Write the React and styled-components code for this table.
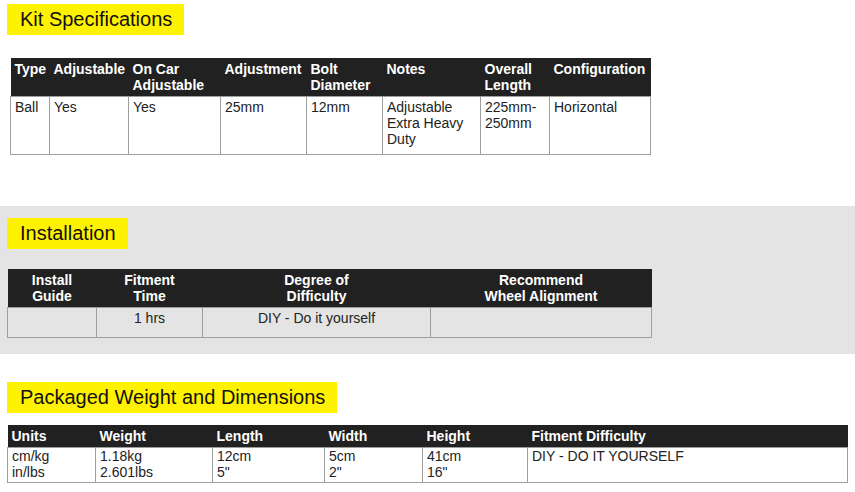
import styled, { createGlobalStyle } from 'styled-components';

const GlobalStyle = createGlobalStyle`
  body {
    margin: 0;
    background: #fff;
    font-family: "Liberation Sans", Arial, sans-serif;
    color: #222;
  }
`;

const Section = styled.section`
  background: ${(p) => (p.$shaded ? '#e4e4e4' : 'transparent')};
  padding: ${(p) => p.$pad};
`;

const Heading = styled.h2`
  display: inline-block;
  margin: 0;
  height: 31px;
  line-height: 31px;
  padding: 0 12px 0 13px;
  background: #fff200;
  color: #111;
  font-size: 20px;
  font-weight: normal;
`;

const Table = styled.table`
  border-collapse: collapse;
  table-layout: fixed;
  width: ${(p) => p.$width}px;
  margin: ${(p) => p.$margin};
  font-size: 14px;
  line-height: 16px;
`;

const Th = styled.th`
  background: #212121;
  color: #fff;
  font-weight: bold;
  vertical-align: top;
  text-align: ${(p) => (p.$center ? 'center' : 'left')};
  padding: 3px 4px;
`;

const Td = styled.td`
  background: ${(p) => (p.$clear ? 'transparent' : '#fff')};
  color: #222;
  border: 1px solid #9e9e9e;
  vertical-align: top;
  text-align: ${(p) => (p.$center ? 'center' : 'left')};
  padding: ${(p) => p.$pad || '2px 4px'};
  height: ${(p) => p.$h || 'auto'};
`;

const kitCols = [39, 79, 92, 86, 76, 98, 69, 101];
const kitHead = ['Type', 'Adjustable', 'On Car Adjustable', 'Adjustment', 'Bolt Diameter', 'Notes', 'Overall Length', 'Configuration'];
const kitRow = ['Ball', 'Yes', 'Yes', '25mm', '12mm', 'Adjustable Extra Heavy Duty', '225mm-250mm', 'Horizontal'];

const instCols = [89, 106, 228, 221];
const instHead = [['Install', 'Guide'], ['Fitment', 'Time'], ['Degree of', 'Difficulty'], ['Recommend', 'Wheel Alignment']];
const instRow = ['', '1 hrs', 'DIY - Do it yourself', ''];

const dimCols = [88, 117, 112, 98, 105, 320];
const dimHead = ['Units', 'Weight', 'Length', 'Width', 'Height', 'Fitment Difficulty'];
const dimRow = [['cm/kg', 'in/lbs'], ['1.18kg', '2.601lbs'], ['12cm', '5"'], ['5cm', '2"'], ['41cm', '16"'], ['DIY - DO IT YOURSELF']];

function Cols({ widths }) {
  return (
    <colgroup>
      {widths.map((w, i) => (
        <col key={i} style={{ width: w }} />
      ))}
    </colgroup>
  );
}

export default function App() {
  return (
    <>
      <GlobalStyle />
      <Section $pad="4px 0 51px 7px">
        <Heading>Kit Specifications</Heading>
        <Table $width={640} $margin="23px 0 0 3px">
          <Cols widths={kitCols} />
          <thead>
            <tr>
              {kitHead.map((h) => (
                <Th key={h}>{h}</Th>
              ))}
            </tr>
          </thead>
          <tbody>
            <tr>
              {kitRow.map((c, i) => (
                <Td key={i} $h="53px">{c}</Td>
              ))}
            </tr>
          </tbody>
        </Table>
      </Section>

      <Section $shaded $pad="12px 0 16px 7px">
        <Heading>Installation</Heading>
        <Table $width={644} $margin="20px 0 0 0">
          <Cols widths={instCols} />
          <thead>
            <tr>
              {instHead.map(([a, b]) => (
                <Th key={a} $center>
                  {a}
                  <br />
                  {b}
                </Th>
              ))}
            </tr>
          </thead>
          <tbody>
            <tr>
              {instRow.map((c, i) => (
                <Td key={i} $clear $center $h="25px">{c}</Td>
              ))}
            </tr>
          </tbody>
        </Table>
      </Section>

      <Section $pad="28px 0 10px 7px">
        <Heading>Packaged Weight and Dimensions</Heading>
        <Table $width={840} $margin="12px 0 0 0">
          <Cols widths={dimCols} />
          <thead>
            <tr>
              {dimHead.map((h) => (
                <Th key={h}>{h}</Th>
              ))}
            </tr>
          </thead>
          <tbody>
            <tr>
              {dimRow.map((lines, i) => (
                <Td key={i} $pad="0 4px 2px">
                  {lines.map((l, j) => (
                    <div key={j}>{l}</div>
                  ))}
                </Td>
              ))}
            </tr>
          </tbody>
        </Table>
      </Section>
    </>
  );
}
